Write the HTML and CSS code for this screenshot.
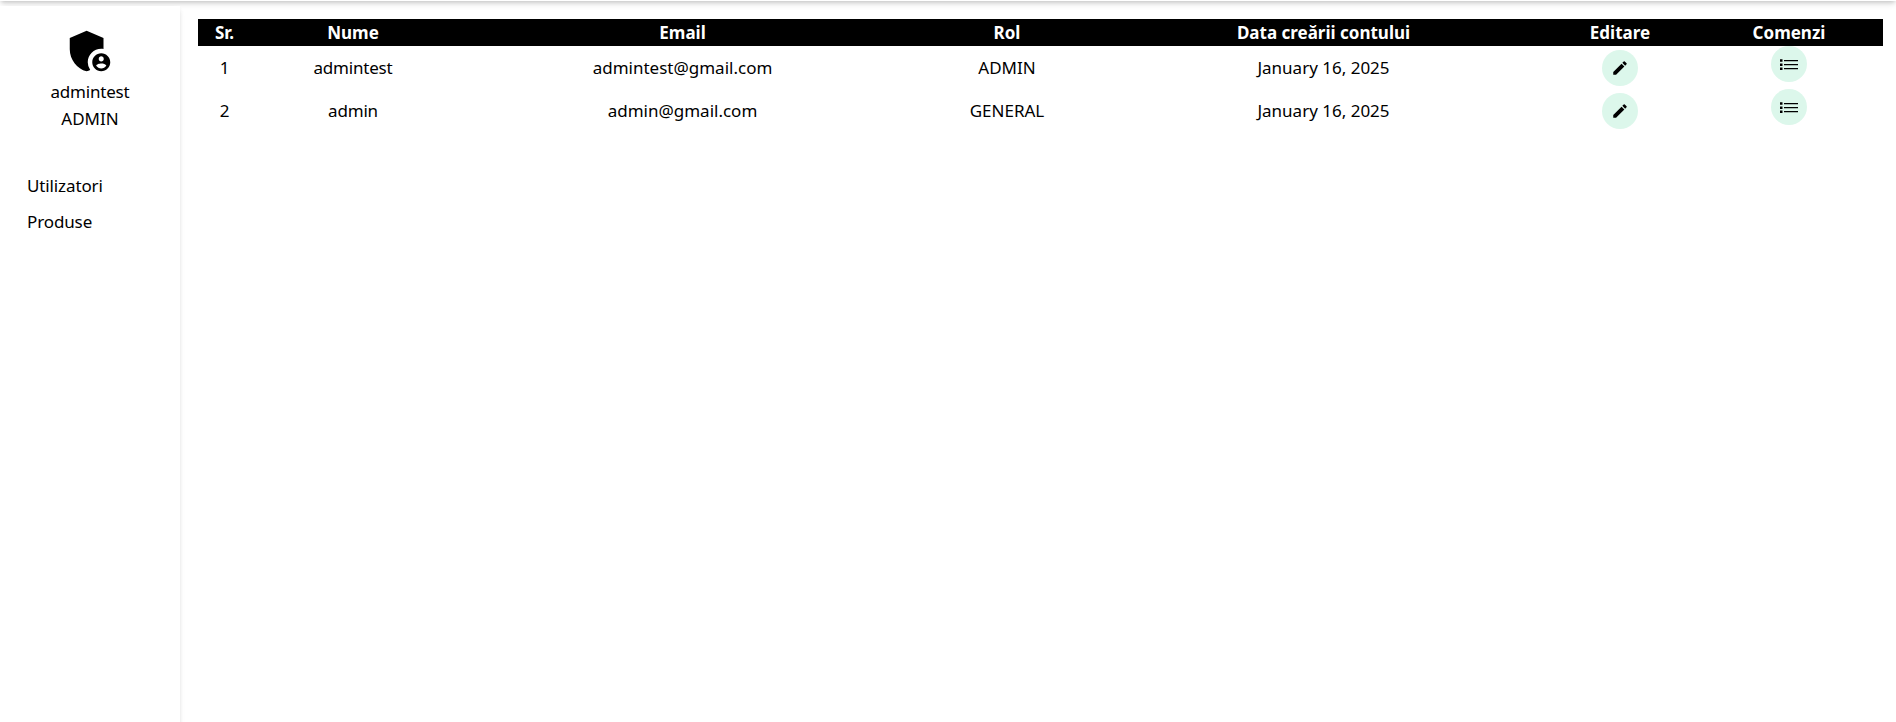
FILE: index.html
```html
<!DOCTYPE html>
<html lang="ro">
<head>
<meta charset="utf-8">
<title>Utilizatori</title>
<link rel="stylesheet" href="styles.css">
</head>
<body>
<svg width="0" height="0" class="defs">
<symbol id="pencil" viewBox="0 0 24 24"><path d="M3 17.25V21h3.75L17.81 9.94l-3.75-3.75L3 17.25zM20.71 7.04a1 1 0 0 0 0-1.41l-2.34-2.34a1 1 0 0 0-1.41 0l-1.83 1.83 3.75 3.75 1.83-1.83z"/></symbol>
<symbol id="list" viewBox="0 0 18 12"><path d="M0 .3h2.500v2.500H0zM0 4.400h2.500v2.500H0zM0 8.500h2.500v2.500H0zM4 .9h14v1.300H4zM4 5h14v1.300H4zM4 9h14v1.300H4z"/></symbol>
</svg>
<header class="topbar"></header>
<div class="layout">
<aside class="sidebar">
<div class="profile">
<svg class="avatar" viewBox="0 0 24 24"><path d="M17 11c.34 0 .67.04 1 .09V6.270L10.500 3 3 6.270v4.910c0 4.540 3.200 8.790 7.500 9.820.55-.13 1.080-.32 1.600-.55A5.970 5.970 0 0 1 11 17c0-3.310 2.690-6 6-6z"/><path d="M17 13c-2.210 0-4 1.790-4 4s1.790 4 4 4 4-1.790 4-4-1.790-4-4-4zm0 1.380c.62 0 1.120.51 1.120 1.120s-.51 1.120-1.120 1.120-1.120-.51-1.120-1.120.5-1.120 1.120-1.120zm0 5.370c-.93 0-1.740-.46-2.240-1.170.05-.72 1.510-1.080 2.240-1.080s2.190.36 2.240 1.080c-.5.710-1.310 1.170-2.240 1.170z"/></svg>
<p class="name">admintest</p>
<p>ADMIN</p>
</div>
<nav class="menu"><a>Utilizatori</a><a>Produse</a></nav>
</aside>
<main class="content">
<table class="users">
<colgroup><col class="c-sr"><col class="c-name"><col class="c-email"><col class="c-role"><col class="c-date"><col class="c-edit"><col class="c-orders"></colgroup>
<thead><tr><th>Sr.</th><th>Nume</th><th>Email</th><th>Rol</th><th>Data creării contului</th><th>Editare</th><th class="orders-head">Comenzi</th></tr></thead>
<tbody>
<tr><td>1</td><td class="name">admintest</td><td>admintest@gmail.com</td><td>ADMIN</td><td>January 16, 2025</td><td><button class="round"><svg class="pencil"><use href="#pencil"/></svg></button></td><td class="orders"><button class="round"><svg class="list"><use href="#list"/></svg></button></td></tr>
<tr><td>2</td><td class="name">admin</td><td>admin@gmail.com</td><td>GENERAL</td><td>January 16, 2025</td><td><button class="round"><svg class="pencil"><use href="#pencil"/></svg></button></td><td class="orders"><button class="round"><svg class="list"><use href="#list"/></svg></button></td></tr>
</tbody>
</table>
</main>
</div>
</body>
</html>
```
FILE: styles.css
```css
* { box-sizing: border-box; }
html { overflow: hidden; }
body { display: flow-root; margin: 0; height: 722px; overflow: hidden; background: #fff; color: #000; font: 17px/27px "Segoe UI", "Noto Sans", sans-serif; }
p { margin: 0; }
.defs { display: block; }
.topbar { height: 64px; margin-top: -63px; background: #fff; box-shadow: 0 4px 6px -1px rgba(0,0,0,.12), 0 2px 4px -1px rgba(0,0,0,.14); }
.layout { display: flex; height: 730px; padding-top: 5px; }
.sidebar { width: 180px; background: #fff; box-shadow: 0 4px 6px -1px rgba(0,0,0,.1), 0 2px 4px -1px rgba(0,0,0,.1); }
.profile { display: flex; flex-direction: column; align-items: center; padding-top: 18px; }
.avatar { width: 54px; height: 54px; }
.name { letter-spacing: -.2px; }
.menu { display: flex; flex-direction: column; padding: 35px 27px; letter-spacing: -.12px; }
.menu a { padding: 4.500px 0; }
.content { flex: 1; padding: 13px 13px 0 18px; }
.users { width: 1685px; table-layout: fixed; border-collapse: collapse; text-align: center; }
.c-sr { width: 53px; } .c-name { width: 204px; } .c-email { width: 455px; } .c-role { width: 194px; } .c-date { width: 439px; } .c-edit { width: 154px; } .c-orders { width: 186px; }
th, td { padding: 0; }
th { height: 27px; background: #000; color: #fff; font-weight: 700; }
td { height: 43px; }
.orders { vertical-align: top; }
.orders, .orders-head { padding-right: 2px; }
.round { display: flex; align-items: center; justify-content: center; width: 36px; height: 36px; margin: 0 auto; padding: 0; border: 0; border-radius: 50%; background: #dcf7eb; color: #000; }
.pencil { width: 18px; height: 18px; }
.list { width: 18px; height: 12px; margin-top: 1px; }
```
